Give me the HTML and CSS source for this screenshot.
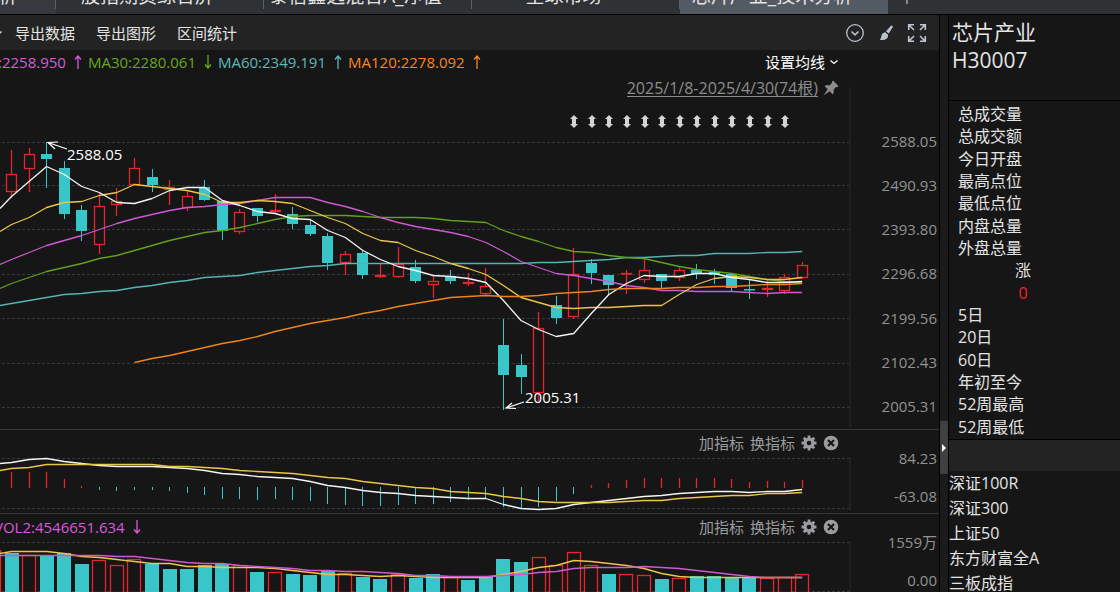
FILE: index.html
```html
<!DOCTYPE html>
<html lang="zh-CN">
    <head>
        <meta charset="utf-8">
        <title>芯片产业_技术分析</title>
        <link rel="stylesheet" href="styles.css">
        <script src="chart.js"></script>
    </head>
    <body>
        <!-- Shared icons -->
        <svg class="sprite" aria-hidden="true">
            <symbol id="up" viewBox="0 0 12 16">
                <path d="M6 15V2M3 5.5L6 2l3 3.5" fill="none" stroke="currentColor" stroke-width="1.3"/>
            </symbol>
            <symbol id="down" viewBox="0 0 12 16">
                <path d="M6 1v13M3 10.5L6 14l3-3.5" fill="none" stroke="currentColor" stroke-width="1.3"/>
            </symbol>
            <symbol id="chevron" viewBox="0 0 10 10">
                <path d="M1.5 3.5L5 6.500 8.500 3.500" fill="none" stroke="currentColor" stroke-width="1.3"/>
            </symbol>
            <symbol id="cross" viewBox="0 0 10 10">
                <path d="M1 1l8 8M9 1l-8 8" fill="none" stroke="currentColor" stroke-width="1"/>
            </symbol>
            <symbol id="gear" viewBox="0 0 16 16">
                <path d="M8 .5V15.500M.5 8H15.500M2.700 2.700L13.300 13.300M13.300 2.700L2.700 13.300" stroke="currentColor" stroke-width="2.800"/>
                <circle cx="8" cy="8" r="4" fill="none" stroke="currentColor" stroke-width="3.200"/>
                <circle cx="8" cy="8" r="2.300" fill="#161616"/>
            </symbol>
            <symbol id="remove" viewBox="0 0 16 16">
                <circle cx="8" cy="8" r="7.300" fill="currentColor"/>
                <path d="M5 5l6 6M11 5l-6 6" stroke="#161616" stroke-width="2.200"/>
            </symbol>
        </svg>

        <nav class="tabs">
            <div class="tab first"><a href="#">芯片产业_分析</a><button aria-label="关闭"><svg><use href="#cross"/></svg></button></div>
            <div class="tab"><a href="#">股指期货综合屏</a><button aria-label="关闭"><svg><use href="#cross"/></svg></button></div>
            <div class="tab"><a href="#">泰信鑫选混合A_净值</a><button aria-label="关闭"><svg><use href="#cross"/></svg></button></div>
            <div class="tab"><a href="#">全球市场</a><button aria-label="关闭"><svg><use href="#cross"/></svg></button></div>
            <div class="tab active"><a href="#">芯片产业_技术分析</a><button aria-label="关闭"><svg><use href="#cross"/></svg></button></div>
            <button class="add" aria-label="新建"><svg viewBox="0 0 14 14"><path d="M7 0v14M0 7h14" stroke="currentColor" stroke-width="2"/></svg></button>
        </nav>

        <div class="workspace">
            <main>
                <div class="toolbar">
                    <svg class="chevron"><use href="#chevron"/></svg>
                    <button>导出数据</button>
                    <button>导出图形</button>
                    <button>区间统计</button>
                    <div class="tools">
                        <button aria-label="更多">
                            <svg viewBox="0 0 20 20"><circle cx="10" cy="10" r="8.300" fill="none" stroke="currentColor" stroke-width="1.300"/><path d="M6.500 8.500L10 11.800l3.500-3.300" fill="none" stroke="currentColor" stroke-width="1.700"/></svg>
                        </button>
                        <button aria-label="画线">
                            <svg viewBox="0 0 20 20"><path d="M15 2.700q2-1 1.700 1.500l-4 6.300-2.700-2.300zM9.200 9.200l2.700 2.300q.6 4.500-3.400 5.200-3 .6-5 .3 1.500-1 1.800-3.500.5-4 3.900-4.300z" fill="currentColor"/></svg>
                        </button>
                        <button aria-label="全屏">
                            <svg viewBox="0 0 20 20"><path d="M1.700 7V1.700H7M13 1.700h5.300V7M18.300 13v5.300H13M7 18.300H1.700V13M2 2l5 5M18 2l-5 5M18 18l-5-5M2 18l5-5" fill="none" stroke="currentColor" stroke-width="1.600"/></svg>
                        </button>
                    </div>
                </div>

                <section class="pane price">
                    <header>
                        <p class="legend">
                            <span class="ma20">:2258.950<svg><use href="#up"/></svg></span>
                            <span class="ma30">MA30:2280.061<svg><use href="#down"/></svg></span>
                            <span class="ma60">MA60:2349.191<svg><use href="#up"/></svg></span>
                            <span class="ma120">MA120:2278.092<svg><use href="#up"/></svg></span>
                        </p>
                        <button class="ma-menu">设置均线 <svg class="chevron"><use href="#chevron"/></svg></button>
                    </header>
                    <div class="range">
                        <a href="#">2025/1/8-2025/4/30(74根)</a>
                        <svg viewBox="0 0 16 16"><path d="M10 .5L15.500 6l-1.300 1.200-1.200-.2-2.400 2.700q1 2.800-.9 4.700L6.700 11.300.5 15.500 4.700 9.300 1.600 6.300Q3.500 4.400 6.300 5.400L9 3 8.800 1.800z" fill="currentColor"/></svg>
                    </div>
                    <div class="plot">
                        <svg id="price" viewBox="0 102 852 327" preserveAspectRatio="xMaxYMin slice"></svg>
                        <ol class="axis">
                            <li>2588.05</li>
                            <li>2490.93</li>
                            <li>2393.80</li>
                            <li>2296.68</li>
                            <li>2199.56</li>
                            <li>2102.43</li>
                            <li>2005.31</li>
                        </ol>
                    </div>
                </section>

                <section class="pane macd">
                    <header>
                        <div class="controls">
                            <button>加指标</button>
                            <button>换指标</button>
                            <button class="icon" aria-label="设置"><svg><use href="#gear"/></svg></button>
                            <button class="icon" aria-label="移除"><svg><use href="#remove"/></svg></button>
                        </div>
                    </header>
                    <div class="plot">
                        <svg id="macd" viewBox="0 452 852 61" preserveAspectRatio="xMaxYMin slice"></svg>
                        <ol class="axis">
                            <li>84.23</li>
                            <li>-63.08</li>
                        </ol>
                    </div>
                </section>

                <section class="pane volume">
                    <header>
                        <p class="legend"><span class="vol2">VOL2:4546651.634<svg><use href="#down"/></svg></span></p>
                        <div class="controls">
                            <button>加指标</button>
                            <button>换指标</button>
                            <button class="icon" aria-label="设置"><svg><use href="#gear"/></svg></button>
                            <button class="icon" aria-label="移除"><svg><use href="#remove"/></svg></button>
                        </div>
                    </header>
                    <div class="plot">
                        <svg id="volume" viewBox="0 536 852 61" preserveAspectRatio="xMaxYMin slice"></svg>
                        <ol class="axis">
                            <li>1559万</li>
                            <li>0.00</li>
                        </ol>
                    </div>
                </section>
            </main>

            <div class="splitter">
                <button aria-label="收起"><svg viewBox="0 0 4 8"><path d="M0 0l4 4-4 4z" fill="#fff"/></svg></button>
            </div>

            <aside>
                <header>
                    <h1>芯片产业</h1>
                    <p>H30007</p>
                </header>
                <ul class="quote">
                    <li>总成交量</li>
                    <li>总成交额</li>
                    <li>今日开盘</li>
                    <li>最高点位</li>
                    <li>最低点位</li>
                    <li>内盘总量</li>
                    <li>外盘总量</li>
                    <li class="count">涨</li>
                    <li class="count rise">0</li>
                    <li>5日</li>
                    <li>20日</li>
                    <li>60日</li>
                    <li>年初至今</li>
                    <li>52周最高</li>
                    <li>52周最低</li>
                </ul>
                <div class="bar"></div>
                <ul class="related">
                    <li><a href="#">深证100R</a></li>
                    <li><a href="#">深证300</a></li>
                    <li><a href="#">上证50</a></li>
                    <li><a href="#">东方财富全A</a></li>
                    <li><a href="#">三板成指</a></li>
                </ul>
            </aside>
        </div>
    </body>
</html>
```

FILE: styles.css
```css
* {
    box-sizing: border-box;
}

body {
    display: flex;
    flex-direction: column;
    height: 100vh;
    margin: 0;
    overflow: hidden;
    background: #161616;
    color: #e4e4e4;
    font: 15px/20px "Open Sans", "Noto Sans CJK SC", sans-serif;
}

h1, p, ul, ol {
    margin: 0;
    padding: 0;
    font-weight: normal;
    list-style: none;
}

a {
    color: inherit;
    text-decoration: none;
}

button {
    padding: 0;
    border: 0;
    background: none;
    color: inherit;
    font: inherit;
    cursor: pointer;
}

svg {
    display: block;
    flex: none;
}

.sprite {
    position: absolute;
    width: 0;
    height: 0;
}

.chevron {
    width: 10px;
    height: 10px;
}

.tabs {
    display: flex;
    flex: none;
    align-items: flex-end;
    height: 15px;
    overflow: hidden;
    background: #2e3235;
    border-bottom: 1px solid #000;
}

    .tab {
        display: flex;
        flex: none;
        align-items: center;
        width: 208px;
        height: 36px;
        font-size: 19px;
        line-height: 36px;
        white-space: nowrap;
    }

    .tab a {
        flex: 1;
        text-align: center;
    }

    .tab button {
        flex: none;
        width: 24px;
        color: #83888d;
    }

    .tab button svg {
        width: 10px;
        height: 10px;
        margin-left: 4px;
    }

    .tab.first {
        justify-content: flex-end;
        width: 56px;
        background: #36393d;
    }

    .tab.first a {
        flex: none;
        margin-right: 14px;
    }

    .tab.active {
        background: #545a63;
    }

    .tab:not(.active)::after {
        content: "";
        flex: none;
        width: 1px;
        height: 26px;
        background: #5d6267;
    }

    .add {
        align-self: flex-end;
        padding: 0 0 10px 12px;
        color: #85898d;
    }

    .add svg {
        width: 14px;
        height: 14px;
    }

.workspace {
    display: flex;
    flex: 1;
    min-height: 0;
}

main {
    flex: 1;
    min-width: 0;
}

.toolbar {
    display: flex;
    align-items: center;
    gap: 21px;
    height: 35px;
    padding-right: 12px;
    background: #232323;
}

    .toolbar .chevron {
        margin: 0 -9px 0 -7px;
    }

    .toolbar > button {
        padding-top: 1px;
    }

    .tools {
        display: flex;
        gap: 11px;
        margin-left: auto;
        color: #bcc3d0;
    }

    .tools svg {
        width: 20px;
        height: 20px;
    }

.pane header {
    display: flex;
    align-items: center;
    justify-content: space-between;
    height: 22px;
    padding: 3px 100px 0 0;
    white-space: nowrap;
}

.pane.price header {
    height: 24px;
    padding-top: 0;
}

.pane.macd, .pane.volume {
    border-top: 1px solid #333740;
}

.legend, .legend span {
    display: flex;
    align-items: center;
}

.legend {
    gap: 2px;
    margin-left: -2px;
}

    .legend svg {
        width: 12px;
        height: 16px;
        margin: 0 2px 0 6px;
    }

    .ma20  { color: #d75bdc; }
    .ma30  { color: #67a81d; }
    .ma60  { color: #5cb8ba; }
    .ma120 { color: #f5871f; }

    .vol2 {
        margin-left: -4px;
        color: #d75bdc;
    }

.ma-menu {
    display: flex;
    align-items: center;
    gap: 4px;
    color: #fff;
}

.range {
    display: flex;
    align-items: center;
    justify-content: flex-end;
    gap: 5px;
    height: 28px;
    padding-right: 100px;
    color: #8c8c8c;
    font-size: 16px;
}

    .range a {
        border-bottom: 1px solid #8c8c8c;
        line-height: 16px;
    }

    .range svg {
        width: 16px;
        height: 16px;
    }

.controls {
    display: flex;
    align-items: center;
    gap: 6px;
    margin-left: auto;
    color: #9a9c9f;
}

    .controls .icon svg {
        width: 16px;
        height: 16px;
    }

.plot {
    display: flex;
    height: 61px;
}

.price .plot {
    height: 327px;
}

    .plot > svg {
        flex: 1;
        min-width: 0;
        height: 100%;
        overflow: visible;
    }

    .axis {
        display: flex;
        flex: none;
        flex-direction: column;
        justify-content: space-between;
        width: 87px;
        padding: 0 2px 11px 0;
        color: #929292;
        line-height: 12px;
        text-align: right;
    }

    .price .axis {
        padding-top: 33px;
        padding-bottom: 17px;
    }

/* Parts drawn by chart.js */
.grid {
    stroke: #343a44;
    stroke-dasharray: 3 2;
}

.edge {
    stroke: #202020;
    stroke-width: 2;
}

.line {
    fill: none;
    stroke-width: 1.3;
    stroke-linejoin: round;
}

.white   { stroke: #f4f4f4; }
.yellow  { stroke: #eac548; }
.magenta { stroke: #cf58d4; }
.green   { stroke: #62a01c; }
.teal    { stroke: #55b3b5; }
.orange  { stroke: #ee841f; }

.rise-bar {
    fill: #161616;
    stroke: #e8242d;
    stroke-width: 1.3;
}

.fall-bar {
    fill: #38c6c8;
    stroke: #38c6c8;
}

.event {
    fill: #d4d4d4;
}

.callout {
    fill: none;
    stroke: #fff;
    stroke-width: 1.2;
}

.note {
    fill: #fff;
}

.splitter {
    flex: none;
    width: 10px;
    background: #1b1b1b;
    border: solid #000;
    border-width: 0 1px;
}

    .splitter button {
        display: flex;
        align-items: center;
        width: 8px;
        height: 53px;
        margin-top: 406px;
        padding-left: 2px;
        background: #404040;
    }

    .splitter svg {
        width: 4px;
        height: 8px;
    }

aside {
    flex: none;
    width: 171px;
    font-size: 16px;
    white-space: nowrap;
}

    aside header {
        height: 86px;
        padding: 3px;
        border-bottom: 1px solid #000;
        font-size: 21px;
        line-height: 28px;
    }

    aside h1 {
        font-size: 21px;
    }

    .quote {
        display: grid;
        grid-auto-rows: 1fr;
        height: 338px;
        padding: 3px 0 0 9px;
    }

    .count {
        width: 130px;
        text-align: center;
    }

    .rise {
        color: #f0242e;
    }

    .bar {
        height: 32px;
        background: #232323;
        border-top: 1px solid #000;
    }

    .related {
        line-height: 25px;
    }
```

FILE: chart.js
```javascript
// Distance between two sessions and the centre of the first full one
const STEP = 17.57
const FIRST = 11.5
const RIGHT = 852

const at = i => FIRST + STEP * i

// [direction, high, body top, body bottom, low]
const CANDLES = [
    ["r", 150, 174, 191, 197], ["r", 148, 154, 168, 191], ["f", 142, 154, 159, 187],
    ["f", 161, 168, 214, 218], ["f", 205, 210, 231, 240], ["r", 193, 206, 244, 253],
    ["r", 188, 201, 204, 215], ["r", 158, 168, 184, 185], ["f", 169, 177, 185, 191],
    ["r", 180, 187, 189, 204], ["r", 190, 196, 207, 210], ["f", 180, 187, 200, 200],
    ["f", 200, 201, 231, 239], ["r", 209, 212, 231, 233], ["f", 208, 208, 216, 221],
    ["r", 194, 210, 211, 212], ["f", 207, 214, 224, 228], ["f", 220, 225, 234, 235],
    ["f", 233, 236, 263, 269], ["r", 251, 254, 262, 274], ["f", 251, 253, 275, 278],
    ["r", 263, 275, 276, 277], ["r", 247, 264, 276, 277], ["f", 260, 267, 281, 282],
    ["r", 275, 281, 284, 297], ["f", 270, 276, 281, 283], ["r", 273, 282, 283, 285],
    ["r", 268, 286, 293, 294], ["f", 319, 345, 375, 409], ["f", 354, 365, 377, 393],
    ["r", 312, 328, 392, 400], ["f", 296, 305, 318, 323], ["r", 248, 274, 316, 318],
    ["f", 259, 263, 273, 283], ["f", 275, 275, 285, 294], ["r", 270, 273, 273, 293],
    ["r", 258, 270, 279, 282], ["f", 274, 274, 281, 288], ["r", 267, 270, 277, 280],
    ["f", 264, 270, 274, 278], ["f", 269, 272, 275, 283], ["f", 273, 274, 288, 291],
    ["f", 280, 289, 290, 298], ["r", 280, 288, 289, 296], ["r", 274, 277, 290, 293],
    ["r", 262, 265, 277, 278]
]

// The first value of every series is where it meets the left edge
const PRICE_LINES = {
    teal: [305, 303, 300, 297, 294, 293, 291, 290, 287, 285, 282, 280, 277, 276, 275, 272, 270, 268, 266, 265, 263, 263, 263, 263, 263, 263, 263, 263, 263, 263, 263, 262, 262, 261, 260, 259, 257, 257, 256, 255, 255, 253, 253, 253, 252, 252, 251],
    green: [288, 283, 277, 271, 267, 263, 258, 255, 250, 245, 240, 236, 232, 230, 227, 223, 219, 216, 215, 215, 215, 216, 217, 217, 217, 218, 220, 221, 222, 230, 236, 241, 247, 251, 252, 255, 257, 258, 262, 266, 269, 271, 273, 276, 279, 281, 282],
    magenta: [264, 259, 252, 245, 240, 235, 229, 223, 218, 214, 210, 207, 206, 204, 203, 200, 197, 197, 197, 202, 206, 211, 217, 222, 226, 229, 232, 236, 242, 251, 261, 267, 273, 275, 278, 281, 285, 287, 290, 290, 291, 291, 291, 292, 293, 292, 292],
    yellow: [231, 224, 217, 207, 202, 201, 195, 192, 184, 186, 188, 190, 194, 202, 202, 200, 201, 203, 210, 217, 223, 233, 240, 242, 250, 256, 263, 268, 274, 285, 297, 302, 307, 308, 307, 307, 306, 305, 305, 294, 284, 278, 276, 277, 279, 279, 277],
    white: [208, 196, 181, 166, 174, 186, 192, 202, 203, 198, 190, 187, 187, 200, 205, 211, 213, 218, 219, 230, 237, 250, 259, 266, 270, 275, 276, 278, 282, 300, 320, 329, 336, 333, 313, 294, 283, 275, 276, 276, 273, 273, 277, 279, 282, 282, 281]
}

// MA120 only starts at the eighth session
const MA120 = [362, 358, 355, 351, 347, 343, 340, 336, 331, 327, 323, 320, 317, 313, 310, 306, 303, 300, 297, 296, 295, 296, 296, 295, 293, 292, 291, 289, 288, 288, 288, 287, 287, 286, 286, 285, 284, 284, 283]

const MACD_ZERO = 487
const MACD_BARS = [472, 472, 472, 479, 486, 489, 490, 489, 489, 490, 492, 494, 498, 498, 499, 498, 499, 500, 503, 504, 505, 505, 504, 503, 503, 501, 499, 498, 506, 508, 506, 500, 493, 485, 483, 480, 478, 478, 478, 478, 478, 479, 482, 481, 482, 480]
const MACD_LINES = {
    white: [463, 462, 459, 458, 461, 463, 465, 466, 466, 466, 467, 468, 470, 473, 474, 476, 477, 478, 481, 485, 487, 490, 492, 493, 495, 496, 497, 498, 498, 504, 508, 509, 508, 504, 502, 500, 498, 496, 495, 493, 492, 491, 491, 492, 491, 491, 489],
    yellow: [470, 468, 467, 464, 464, 464, 464, 464, 464, 464, 466, 466, 467, 468, 470, 471, 472, 473, 475, 477, 478, 481, 483, 485, 487, 488, 491, 492, 493, 496, 498, 501, 502, 502, 502, 502, 501, 500, 500, 498, 497, 496, 495, 495, 493, 493, 492]
}

const VOLUME_BASE = 592
const VOLUME_SIDES = "frfffrrrfffffrfrfffrffrffrffffrrrrfrrfrffffrrr"
const VOLUME_BARS = [553, 555, 555, 553, 564, 560, 565, 559, 564, 569, 569, 565, 564, 565, 572, 572, 574, 575, 571, 573, 577, 579, 574, 578, 574, 577, 580, 577, 559, 562, 557, 565, 552, 565, 574, 574, 575, 579, 578, 576, 576, 577, 577, 578, 577, 574]
const VOLUME_LINES = {
    yellow: [553, 551, 551, 551, 553, 556, 557, 559, 561, 563, 563, 566, 566, 567, 567, 567, 568, 570, 572, 574, 574, 575, 576, 575, 576, 577, 577, 577, 577, 574, 571, 567, 565, 560, 561, 563, 565, 568, 573, 576, 577, 577, 577, 577, 577, 577, 577],
    magenta: [555, 555, 555, 555, 555, 555, 555, 556, 556, 558, 560, 562, 563, 563, 565, 566, 567, 568, 570, 570, 571, 571, 572, 573, 575, 575, 576, 576, 576, 575, 574, 572, 571, 568, 567, 567, 567, 566, 567, 568, 570, 572, 574, 576, 577, 577, 577]
}

const add = (parent, name, attributes, text) => {
    const el = document.createElementNS("http://www.w3.org/2000/svg", name)
    for (const key in attributes) {
        el.setAttribute(key, attributes[key])
    }
    if (text) {
        el.textContent = text
    }
    parent.appendChild(el)
}

const drawGrid = (svg, rows, top, bottom) => {
    rows.forEach(y => {
        add(svg, "line", { class: "grid", x1: 2, x2: RIGHT, y1: y + .5, y2: y + .5 })
    })
    add(svg, "line", { class: "edge", x1: 850, x2: 850, y1: top, y2: bottom })
}

const drawLine = (svg, color, points) => {
    add(svg, "polyline", { class: `line ${color}`, points: points.join(" ") })
}

const drawLines = (svg, lines) => {
    for (const color in lines) {
        drawLine(svg, color, lines[color].map((y, i) => `${i ? at(i - 1) : 0},${y + .5}`))
    }
}

const sideClass = side => side === "r" ? "rise-bar" : "fall-bar"

// Bars and wicks sit on whole pixels so that their edges stay sharp
const drawBar = (svg, side, center, top, bottom, width) => {
    add(svg, "rect", {
        class: sideClass(side),
        x: Math.floor(center - width / 2) + .5,
        y: top + .5,
        width,
        height: Math.max(bottom - top - (side === "r" ? 0 : 1), .5)
    })
}

const drawWick = (svg, side, center, top, bottom) => {
    const x = Math.floor(center) + .5
    add(svg, "line", { class: sideClass(side), x1: x, x2: x, y1: top, y2: bottom + 1 })
}

const drawPrice = () => {
    const svg = document.querySelector("#price")
    drawGrid(svg, [142, 185, 229, 274, 318, 363, 407], 87, 427)

    CANDLES.forEach(([side, high, top, bottom, low], i) => {
        drawWick(svg, side, at(i), high, low)
        drawBar(svg, side, Math.floor(at(i)) + .5, top, bottom, 10)
    })

    drawLines(svg, PRICE_LINES)
    drawLine(svg, "orange", MA120.map((y, i) => `${at(i + 7)},${y + .5}`))

    // Event marks above the last sessions
    for (let i = 32; i < 45; i++) {
        const x = Math.floor(at(i)) + 1
        add(svg, "path", { class: "event", d: `M${x} 115l4 4h-2v5h2l-4 4-4-4h2v-5h-2z` })
    }

    add(svg, "path", { class: "callout", d: "M67 149L48 142.500M58 142L48 142.500L55 149" })
    add(svg, "text", { class: "note", x: 67, y: 160 }, "2588.05")
    add(svg, "path", { class: "callout", d: "M524 402L506 408M512 403L506 408L516 408.500" })
    add(svg, "text", { class: "note", x: 525, y: 403 }, "2005.31")
}

const drawMacd = () => {
    const svg = document.querySelector("#macd")
    drawGrid(svg, [458, 508], 457, 510)
    MACD_BARS.forEach((y, i) => {
        const side = y < MACD_ZERO ? "r" : "f"
        drawWick(svg, side, at(i), Math.min(y, MACD_ZERO), Math.max(y, MACD_ZERO))
    })
    drawLines(svg, MACD_LINES)
}

const drawVolume = () => {
    const svg = document.querySelector("#volume")
    drawGrid(svg, [542, 591], 541, 592)
    drawBar(svg, "r", -6, 550, VOLUME_BASE, 13)
    VOLUME_BARS.forEach((y, i) => {
        drawBar(svg, VOLUME_SIDES[i], at(i), y, VOLUME_BASE, 13)
    })
    drawLines(svg, VOLUME_LINES)
}

document.addEventListener("DOMContentLoaded", () => {
    drawPrice()
    drawMacd()
    drawVolume()
})
```
